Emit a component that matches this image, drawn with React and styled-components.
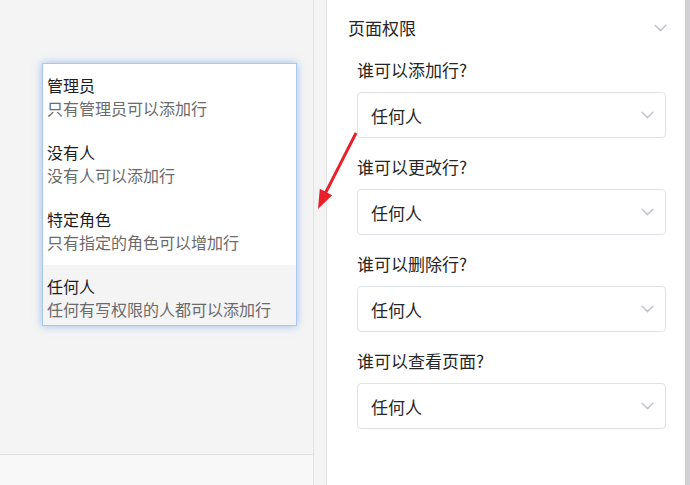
import React from 'react'
import styled, { createGlobalStyle } from 'styled-components'

const GlobalStyle = createGlobalStyle`
  html, body {
    margin: 0;
    padding: 0;
    width: 690px;
    height: 485px;
    overflow: hidden;
    background: #ffffff;
  }
  body {
    font-family: "Noto Sans CJK SC", "Noto Sans", sans-serif;
    color: #1f1f1f;
  }
`

const options = [
  { title: '管理员', desc: '只有管理员可以添加行' },
  { title: '没有人', desc: '没有人可以添加行' },
  { title: '特定角色', desc: '只有指定的角色可以增加行' },
  { title: '任何人', desc: '任何有写权限的人都可以添加行', active: true },
]

const questions = ['谁可以添加行?', '谁可以更改行?', '谁可以删除行?', '谁可以查看页面?']

const Chevron = ({ size = 12 }) => (
  <svg width={size} height={size * 0.6} viewBox="0 0 12 7" fill="none">
    <path d="M1 1l5 5 5-5" stroke="#c3c6cc" strokeWidth="1.4" strokeLinecap="round" strokeLinejoin="round" />
  </svg>
)

const App = () => {
  return (
    <Page>
      <GlobalStyle />
      <LeftPane>
        <Canvas />
        <Footer />
        <Menu>
          {options.map(o => (
            <MenuItem key={o.title} active={o.active}>
              <ItemTitle>{o.title}</ItemTitle>
              <ItemDesc>{o.desc}</ItemDesc>
            </MenuItem>
          ))}
        </Menu>
      </LeftPane>
      <Gutter />
      <Panel>
        <Header>
          <span>页面权限</span>
          <Chevron size={13} />
        </Header>
        {questions.map(q => (
          <Field key={q}>
            <Label>{q}</Label>
            <Select>
              <span>任何人</span>
              <Chevron size={13} />
            </Select>
          </Field>
        ))}
      </Panel>
      <Scrollbar />
      {/* red annotation arrow pointing from the select to the menu */}
      <Arrow width="690" height="485" viewBox="0 0 690 485">
        <path d="M354.7 132.3 L357.3 133.7 L327.3 192.7 L332.2 195.2 L318 209 L319.8 188.8 L324.7 191.3 Z" fill="#e8202a" />
      </Arrow>
    </Page>
  )
}

const Page = styled.div`
  position: relative;
  display: flex;
  width: 690px;
  height: 485px;
`

const LeftPane = styled.div`
  position: relative;
  box-sizing: border-box;
  width: 314px;
  display: flex;
  flex-direction: column;
  border-right: 1px solid #e2e2e2;
`

const Canvas = styled.div`
  flex: 1;
  background: #f4f4f4;
`

const Footer = styled.div`
  height: 30px;
  border-top: 1px solid #e0e0e0;
  background: #f8f8f8;
`

const Menu = styled.div`
  position: absolute;
  left: 42px;
  top: 63px;
  width: 255px;
  height: 263px;
  box-sizing: border-box;
  overflow: hidden;
  background: #ffffff;
  border: 1px solid #a8c7ef;
  box-shadow: 0 0 8px rgba(70, 135, 230, 0.5);
`

const MenuItem = styled.div`
  box-sizing: border-box;
  height: 67px;
  padding: 10px 4px 11px;
  background: ${p => (p.active ? '#f4f4f4' : '#ffffff')};
`

const ItemTitle = styled.div`
  font-size: 16px;
  line-height: 23px;
  color: #1c1c1c;
`

const ItemDesc = styled.div`
  font-size: 16px;
  line-height: 23px;
  color: #6b6b6b;
  white-space: nowrap;
`

const Gutter = styled.div`
  box-sizing: border-box;
  width: 13px;
  background: #f4f4f4;
  border-right: 1px solid #e2e2e2;
`

const Panel = styled.div`
  box-sizing: border-box;
  width: 358px;
  background: #ffffff;
  padding: 16px 18px 0 21px;
`

const Header = styled.div`
  display: flex;
  align-items: center;
  justify-content: space-between;
  height: 24px;
  font-size: 17px;
  line-height: 24px;
  color: #262626;
  margin-bottom: 18px;
`

const Field = styled.div`
  display: flex;
  flex-direction: column;
  padding-left: 9px;
  margin-right: 1px;
  margin-bottom: 17px;
`

const Label = styled.div`
  font-size: 17px;
  line-height: 24px;
  color: #262626;
  margin-bottom: 10px;
`

const Select = styled.div`
  box-sizing: border-box;
  height: 46px;
  display: flex;
  align-items: center;
  justify-content: space-between;
  padding: 0 11px 0 13px;
  border: 1px solid #dfe2e8;
  border-radius: 4px;
  font-size: 17px;
  color: #262626;
`

const Scrollbar = styled.div`
  width: 5px;
  background: #d2d2d6;
`

const Arrow = styled.svg`
  position: absolute;
  left: 0;
  top: 0;
  pointer-events: none;
`

export default App
